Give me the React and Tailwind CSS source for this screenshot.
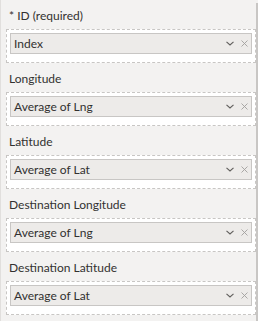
const fields = [
  { label: "* ID (required)", value: "Index" },
  { label: "Longitude", value: "Average of Lng" },
  { label: "Latitude", value: "Average of Lat" },
  { label: "Destination Longitude", value: "Average of Lng" },
  { label: "Destination Latitude", value: "Average of Lat" },
];

const Chevron = () => (
  <svg width="8" height="5" viewBox="0 0 8 5" className="text-[#605e5c]">
    <path d="M0.5 0.8l3.5 3.2L7.5 0.8" fill="none" stroke="currentColor" strokeWidth="1.1" />
  </svg>
);

const Cross = () => (
  <svg width="7" height="7" viewBox="0 0 7 7" className="text-[#a19f9d]">
    <path d="M0.5 0.5l6 6M6.5 0.5l-6 6" fill="none" stroke="currentColor" strokeWidth="0.9" />
  </svg>
);

const FieldWell = ({ label, value }) => {
  return (
    <div>
      <div className="h-[29px] pt-[9px] pl-[3px] text-[12px] leading-[14px] text-[#323130]">{label}</div>
      <div className="border border-dashed border-[#c8c6c4] bg-white pt-[3px] pb-[8px] px-[3px]">
        <div className="h-[21px] flex items-center border border-[#c8c6c4] bg-[#edebe9] pl-[3px] pr-[3px]">
          <span className="flex-1 text-[12px] leading-[14px] text-[#323130]">{value}</span>
          <div className="flex items-center gap-[7px]">
            <Chevron />
            <Cross />
          </div>
        </div>
      </div>
    </div>
  );
};

export default function App() {
  return (
    <div className="w-[258px] h-[321px] flex bg-[#f3f2f1] overflow-hidden" style={{ fontFamily: 'Lato, "Noto Sans", sans-serif' }}>
      <div className="flex-1 border-l border-[#e1dfdd] pl-[5px]">
        {fields.map((f, i) => (
          <FieldWell key={i} label={f.label} value={f.value} />
        ))}
      </div>
      <div className="w-[2px] mt-[3px] bg-[#c8c6c4]" />
    </div>
  );
}
